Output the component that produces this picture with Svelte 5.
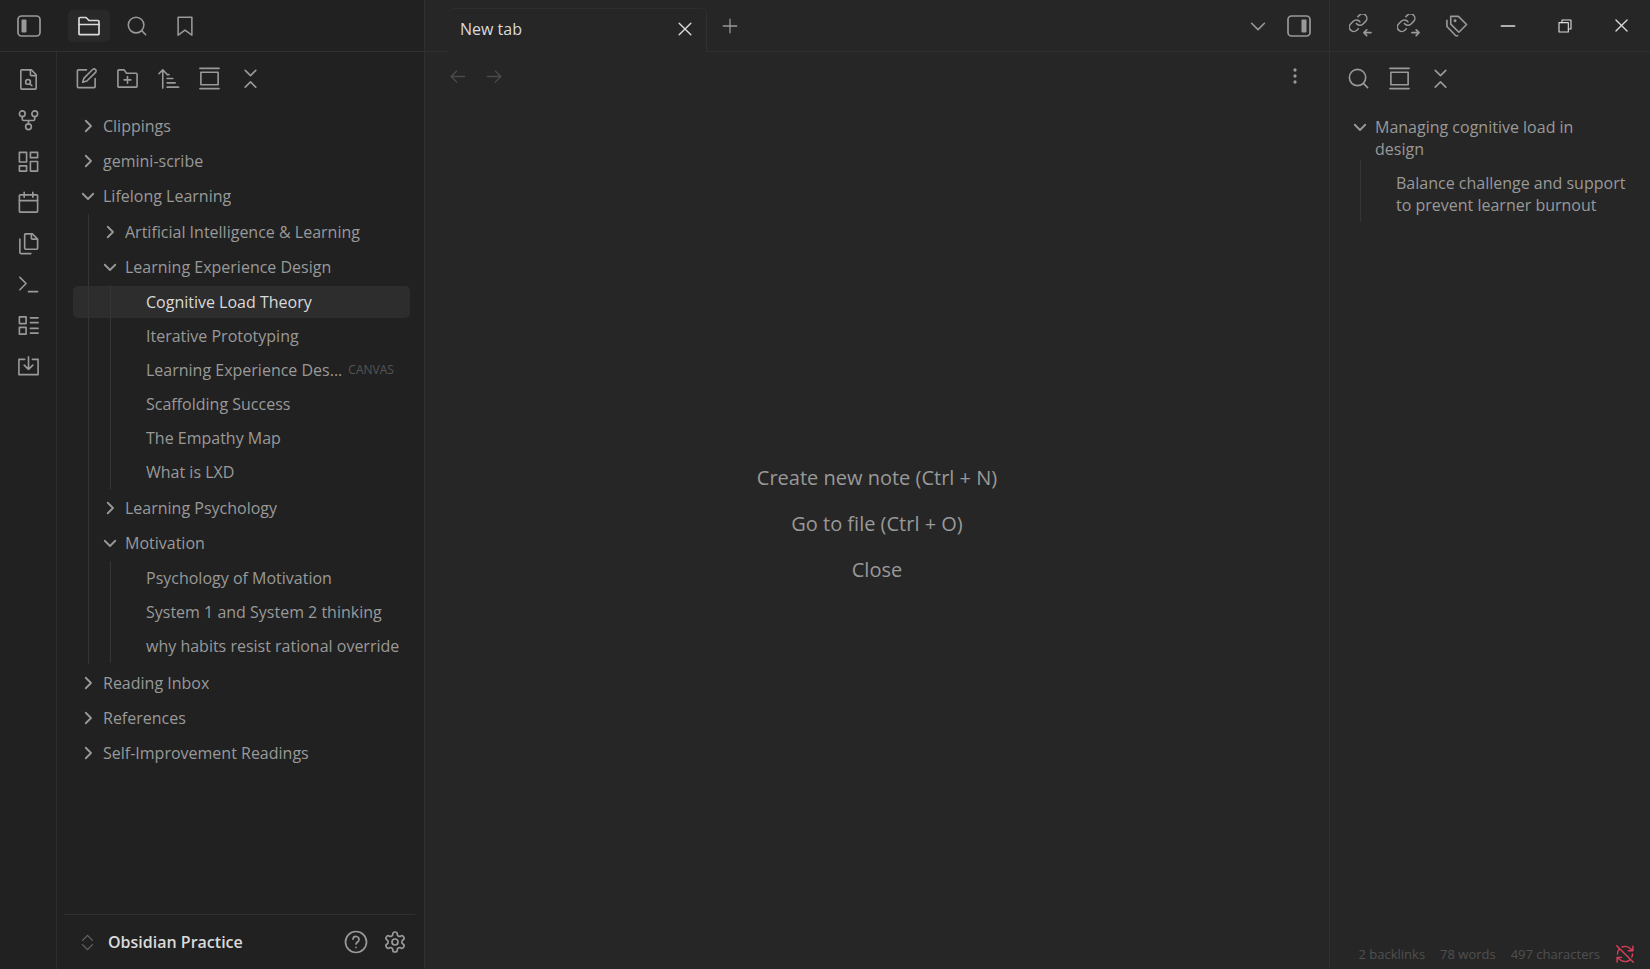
<script lang="ts">
  interface Item {
    name: string;
    tag?: string;
    active?: boolean;
    open?: boolean;
    children?: Item[];
  }

  const link =
    '<g transform="translate(-1.5 -2) scale(.92)"><path d="M10 13a5 5 0 0 0 7.54.54l3-3a5 5 0 0 0-7.07-7.07l-1.72 1.71"/><path d="M14 11a5 5 0 0 0-7.54-.54l-3 3a5 5 0 0 0 7.07 7.07l1.71-1.71"/></g>';

  const icons: Record<string, string> = {
    sidebarLeft: '<rect x="1" y="2" width="22" height="20" rx="3.5"/><rect x="4.5" y="5.5" width="5" height="13" rx="1" fill="currentColor" stroke="none"/>',
    sidebarRight: '<rect x="1" y="2" width="22" height="20" rx="3.5"/><rect x="14.5" y="5.5" width="5" height="13" rx="1" fill="currentColor" stroke="none"/>',
    folder: '<path d="M2 20V4.5a1 1 0 0 1 1-1h6l3 3h9a1 1 0 0 1 1 1V20a.6.6 0 0 1-.6.6H2.6A.6.6 0 0 1 2 20Z"/><path d="M2 10.5h20"/>',
    search: '<circle cx="11" cy="11" r="8.5"/><path d="m21.5 21.5-4.4-4.4"/>',
    bookmark: '<path d="M4.5 2.5h15V22L12 16.5 4.5 22Z"/>',
    fileSearch: '<path d="M14 2v5a1 1 0 0 0 1 1h5"/><path d="M15 2H5a1 1 0 0 0-1 1v18a1 1 0 0 0 1 1h14a1 1 0 0 0 1-1V7Z"/><circle cx="11.5" cy="14.5" r="2.5"/><path d="m13.3 16.3 2.2 2.2"/>',
    graph: '<circle cx="12" cy="18.5" r="3"/><circle cx="5.5" cy="5" r="3"/><circle cx="18.5" cy="5" r="3"/><path d="M18.5 8v2.5A1.5 1.5 0 0 1 17 12H7a1.5 1.5 0 0 1-1.5-1.5V8M12 12v3.5"/>',
    dashboard: '<rect x="2.5" y="2.5" width="7.5" height="10"/><rect x="14" y="2.5" width="7.5" height="5.5"/><rect x="14" y="12" width="7.5" height="10"/><rect x="2.5" y="16.5" width="7.5" height="5.5"/>',
    calendar: '<rect x="2.5" y="4" width="19" height="18" rx="1"/><path d="M7.5 1.5v5M16.5 1.5v5M2.5 10h19"/>',
    files: '<path d="M20.5 7.5H16a1 1 0 0 1-1-1V2"/><path d="M9 18a1 1 0 0 1-1-1V3a1 1 0 0 1 1-1h7l5.5 5.5V17a1 1 0 0 1-1 1Z"/><path d="M3 7.5v14a1 1 0 0 0 1 1h10.5"/>',
    terminal: '<path d="m3 17.5 6.5-6.5L3 4.5M12 19.5h9.5"/>',
    list: '<rect x="2.5" y="3" width="7" height="7"/><rect x="2.5" y="14" width="7" height="7"/><path d="M14 4h8M14 9h8M14 15h8M14 20h8"/>',
    importBox: '<path d="M8 4.5H2v16h20v-16h-6M12 2v13M7.5 10.5 12 15l4.5-4.5"/>',
    edit: '<path d="M12 3H3.5a1 1 0 0 0-1 1v16.500a1 1 0 0 0 1 1H20a1 1 0 0 0 1-1V12"/><path d="M18.4 2.600a2.1 2.1 0 0 1 3 3l-9 9L8 16l1.400-4.400Z"/>',
    folderPlus: '<path d="M2 20V4a1 1 0 0 1 1-1h5.500L11 6.500h10a1 1 0 0 1 1 1V20a1 1 0 0 1-1 1H3a1 1 0 0 1-1-1Z"/><path d="M12 10v7M8.500 13.500h7"/>',
    sort: '<path d="m2 7 4-4 4 4M6 3v19M10.500 8h2M10.500 12h6M10.500 16.500h8.500M10.500 21h12"/>',
    gallery: '<path d="M2 1.500h20M2 22.500h20"/><rect x="3" y="5.500" width="18" height="13"/>',
    collapse: '<path d="m6.500 21 5.500-5.500 5.500 5.500M6.500 3.500 12 9l5.500-5.500"/>',
    close: '<path d="m5 5 14 14M19 5 5 19"/>',
    plus: '<path d="M12 3v18M3 12h18"/>',
    down: '<path d="m5 9 7 7 7-7"/>',
    right: '<path d="m9 5 7 7-7 7"/>',
    back: '<path d="M21 12H4M11 5l-7 7 7 7"/>',
    forward: '<path d="M3 12h17M13 5l7 7-7 7"/>',
    more: '<g fill="currentColor" stroke="none"><circle cx="12" cy="4" r="2.2"/><circle cx="12" cy="12" r="2.2"/><circle cx="12" cy="20" r="2.2"/></g>',
    linkIn: link + '<path d="M23 19.5h-7M18.500 16.500l-3 3 3 3"/>',
    linkOut: link + '<path d="M15.500 19.500h7M20 16.500l3 3-3 3"/>',
    tags: '<path d="M6 2.500v8l8.500 8.500 8-8L14 2.500Z"/><path d="M2 6.500V13l9 9.500a1.500 1.500 0 0 0 2.200 0"/><circle cx="10.500" cy="7" r=".7" fill="currentColor"/>',
    minimize: '<path d="M3 12h18"/>',
    restore: '<rect x="3" y="7" width="14" height="14"/><path d="M7.500 7V3H21v13.500h-4"/>',
    updown: '<path d="m5 15 7 7 7-7M5 9l7-7 7 7"/>',
    help: '<circle cx="12" cy="12" r="10.500"/><path d="M9 9.200a3 3 0 0 1 6 .6c0 2-3 2.700-3 4.200M12 17.300v.2"/>',
    gear: '<path d="M12.22 2h-.44a2 2 0 0 0-2 2v.18a2 2 0 0 1-1 1.73l-.43.25a2 2 0 0 1-2 0l-.15-.08a2 2 0 0 0-2.73.73l-.22.38a2 2 0 0 0 .73 2.73l.15.1a2 2 0 0 1 1 1.72v.51a2 2 0 0 1-1 1.74l-.15.09a2 2 0 0 0-.73 2.73l.22.38a2 2 0 0 0 2.73.73l.15-.08a2 2 0 0 1 2 0l.43.25a2 2 0 0 1 1 1.73V20a2 2 0 0 0 2 2h.44a2 2 0 0 0 2-2v-.18a2 2 0 0 1 1-1.73l.43-.25a2 2 0 0 1 2 0l.15.08a2 2 0 0 0 2.73-.73l.22-.39a2 2 0 0 0-.73-2.73l-.15-.08a2 2 0 0 1-1-1.74v-.5a2 2 0 0 1 1-1.74l.15-.09a2 2 0 0 0 .73-2.73l-.22-.38a2 2 0 0 0-2.73-.73l-.15.08a2 2 0 0 1-2 0l-.43-.25a2 2 0 0 1-1-1.73V4a2 2 0 0 0-2-2z"/><circle cx="12" cy="12" r="3"/>',
    syncOff: '<path d="M21 8l-2.300-2.300A9.500 9.500 0 0 0 8.500 3.600M21.500 2.500V8H16M3 12a9 9 0 0 1 2.200-6M21 12c0 1.300-.3 2.500-.8 3.600M3 16l2.300 2.300A9.500 9.500 0 0 0 18 19M8 16H2.500v5.500M2 2l20 20"/>',
  };

  const ribbon = [
    ['fileSearch', 'Open quick switcher'],
    ['graph', 'Open graph view'],
    ['dashboard', 'Create new canvas'],
    ['calendar', "Open today's daily note"],
    ['files', 'Insert template'],
    ['terminal', 'Open command palette'],
    ['list', 'Create new base'],
    ['importBox', 'Import'],
  ];

  const tools = [
    ['edit', 'New note'],
    ['folderPlus', 'New folder'],
    ['sort', 'Change sort order'],
    ['gallery', 'Auto-reveal current file'],
    ['collapse', 'Collapse all'],
  ];

  const outlineTools = [
    ['search', 'Search'],
    ['gallery', 'Auto-scroll'],
    ['collapse', 'Collapse outline'],
  ];

  const files: Item[] = [
    { name: 'Clippings', children: [] },
    { name: 'gemini-scribe', children: [] },
    {
      name: 'Lifelong Learning',
      open: true,
      children: [
        { name: 'Artificial Intelligence & Learning', children: [] },
        {
          name: 'Learning Experience Design',
          open: true,
          children: [
            { name: 'Cognitive Load Theory', active: true },
            { name: 'Iterative Prototyping' },
            { name: 'Learning Experience Des...', tag: 'CANVAS' },
            { name: 'Scaffolding Success' },
            { name: 'The Empathy Map' },
            { name: 'What is LXD' },
          ],
        },
        { name: 'Learning Psychology', children: [] },
        {
          name: 'Motivation',
          open: true,
          children: [
            { name: 'Psychology of Motivation' },
            { name: 'System 1 and System 2 thinking' },
            { name: 'why habits resist rational override' },
          ],
        },
      ],
    },
    { name: 'Reading Inbox', children: [] },
    { name: 'References', children: [] },
    { name: 'Self-Improvement Readings', children: [] },
  ];
</script>

{#snippet icon(name: string, size = 24)}
  <svg class="icon" width={size} height={size} viewBox="0 0 24 24" aria-hidden="true">{@html icons[name]}</svg>
{/snippet}

{#snippet tree(items: Item[], depth: number)}
  <ul class="tree" class:nested={depth > 0}>
    {#each items as item}
      <li>
        <button class="row" class:file={!item.children} class:active={item.active} style="--depth: {depth}">
          {#if item.children}
            <span class="twist">{@render icon(item.open ? 'down' : 'right', 18)}</span>
          {/if}
          <span class="name">{item.name}</span>
          {#if item.tag}<span class="tag">{item.tag}</span>{/if}
        </button>
        {#if item.open && item.children}
          <div class="kids" style="--depth: {depth}">{@render tree(item.children, depth + 1)}</div>
        {/if}
      </li>
    {/each}
  </ul>
{/snippet}

<div class="app">
  <aside class="left">
    <header class="bar">
      <button class="toggle" aria-label="Toggle left sidebar">{@render icon('sidebarLeft')}</button>
      <button class="panel-tab on" aria-label="Files">{@render icon('folder')}</button>
      <button class="panel-tab" aria-label="Search">{@render icon('search', 22)}</button>
      <button class="panel-tab" aria-label="Bookmarks">{@render icon('bookmark', 22)}</button>
    </header>
    <div class="left-body">
      <nav class="ribbon">
        {#each ribbon as [name, label]}
          <button aria-label={label}>{@render icon(name, 23)}</button>
        {/each}
      </nav>
      <div class="explorer">
        <div class="tools">
          {#each tools as [name, label]}
            <button aria-label={label}>{@render icon(name, 23)}</button>
          {/each}
        </div>
        {@render tree(files, 0)}
        <footer class="vault">
          <button class="vault-name"><span class="dim">{@render icon('updown', 17)}</span>Obsidian Practice</button>
          <button aria-label="Help">{@render icon('help')}</button>
          <button aria-label="Settings">{@render icon('gear')}</button>
        </footer>
      </div>
    </div>
  </aside>

  <main>
    <header class="bar tabs">
      <div class="tab">
        <span>New tab</span>
        <button aria-label="Close tab">{@render icon('close', 20)}</button>
      </div>
      <button class="new" aria-label="New tab">{@render icon('plus', 18)}</button>
      <div class="tabs-end">
        <button aria-label="Tab list">{@render icon('down', 22)}</button>
        <button aria-label="Toggle right sidebar">{@render icon('sidebarRight')}</button>
      </div>
    </header>
    <div class="view-bar">
      <button class="faint" aria-label="Back" disabled>{@render icon('back', 19)}</button>
      <button class="faint" aria-label="Forward" disabled>{@render icon('forward', 19)}</button>
      <button class="more" aria-label="More options">{@render icon('more', 18)}</button>
    </div>
    <div class="empty">
      <button>Create new note (Ctrl + N)</button>
      <button>Go to file (Ctrl + O)</button>
      <button>Close</button>
    </div>
  </main>

  <aside class="right">
    <header class="bar">
      <button class="side-tab" aria-label="Backlinks">{@render icon('linkIn', 23)}</button>
      <button class="side-tab" aria-label="Outgoing links">{@render icon('linkOut', 23)}</button>
      <button class="side-tab" aria-label="Tags">{@render icon('tags', 23)}</button>
      <div class="window">
        <button aria-label="Minimize">{@render icon('minimize', 18)}</button>
        <button aria-label="Restore">{@render icon('restore', 16)}</button>
        <button aria-label="Close">{@render icon('close', 19)}</button>
      </div>
    </header>
    <div class="tools">
      {#each outlineTools as [name, label]}
        <button aria-label={label}>{@render icon(name, 23)}</button>
      {/each}
    </div>
    <div class="outline">
      <button class="heading"><span class="twist">{@render icon('down', 18)}</span>Managing cognitive load in design</button>
      <div class="sub">
        <button class="heading">Balance challenge and support to prevent learner burnout</button>
      </div>
    </div>
    <footer class="status">
      <span>2 backlinks</span>
      <span>78 words</span>
      <span>497 characters</span>
      <button aria-label="Sync is off">{@render icon('syncOff', 20)}</button>
    </footer>
  </aside>
</div>

<style>
  :global(body) {
    background: #262626;
  }
  .app {
    --line: #303030;
    --muted: #999;
    display: grid;
    grid-template-columns: 425px 1fr 321px;
    min-height: 100vh;
    color: var(--muted);
    font: 16px/22px "Segoe UI", "Open Sans", "Noto Sans", sans-serif;
  }
  button {
    display: flex;
    align-items: center;
    justify-content: center;
    padding: 0;
    border: 0;
    background: none;
    color: inherit;
    font: inherit;
    text-align: left;
  }
  .icon {
    display: block;
    flex: none;
    fill: none;
    stroke: currentColor;
    stroke-width: 1.7;
    stroke-linecap: round;
    stroke-linejoin: round;
  }
  .bar {
    display: flex;
    align-items: center;
    box-sizing: border-box;
    height: 52px;
    border-bottom: 1px solid var(--line);
  }

  .left {
    display: flex;
    flex-direction: column;
    border-right: 1px solid #303030;
    background: #212121;
  }
  .left .bar {
    gap: 6px;
  }
  .toggle {
    width: 57px;
  }
  .panel-tab {
    width: 42px;
    height: 32px;
    border-radius: 5px;
  }
  .toggle + .panel-tab {
    margin-left: 5px;
  }
  .panel-tab.on {
    background: #292929;
    color: #dadada;
  }
  .left-body {
    display: flex;
    flex: 1;
  }
  .ribbon {
    display: flex;
    flex-direction: column;
    gap: 18px;
    box-sizing: border-box;
    width: 57px;
    padding-top: 16px;
    border-right: 1px solid #2e2e2e;
  }
  .explorer {
    display: flex;
    flex: 1;
    flex-direction: column;
    min-width: 0;
  }
  .tools {
    display: flex;
    gap: 18px;
    padding: 15px 18px 0;
  }

  .tree {
    margin: 0;
    padding: 19px 14px 0 16px;
    list-style: none;
  }
  .tree.nested {
    padding: 1px 0;
  }
  .row {
    justify-content: flex-start;
    box-sizing: border-box;
    width: 100%;
    height: 33px;
    margin-bottom: 2px;
    padding: 0 10px 0 calc(6px + var(--depth) * 22px);
    border-radius: 5px;
    white-space: nowrap;
  }
  .row.file {
    height: 32px;
    padding-left: calc(29px + var(--depth) * 22px);
  }
  .row.active {
    background: #2d2d2e;
    color: #dadada;
  }
  .twist {
    display: flex;
    flex: none;
    width: 24px;
  }
  .twist .icon {
    stroke-width: 2.4;
  }
  .name {
    overflow: hidden;
    text-overflow: ellipsis;
  }
  .tag {
    margin-left: 6px;
    color: #555;
    font-size: 12px;
  }
  .kids {
    position: relative;
  }
  .kids::before {
    position: absolute;
    z-index: 1;
    top: 0;
    bottom: 2px;
    left: calc(15px + var(--depth) * 22px);
    width: 1px;
    background: #353535;
    content: "";
  }

  .vault {
    display: flex;
    align-items: center;
    gap: 15px;
    height: 54px;
    margin: auto 9px 0 7px;
    padding: 0 8px 0 15px;
    border-top: 1px solid var(--line);
  }
  .vault-name {
    flex: 1;
    justify-content: flex-start;
    gap: 12px;
    color: #dadada;
    font-weight: 600;
  }
  .dim {
    color: #666;
  }

  main {
    display: flex;
    flex-direction: column;
    min-width: 0;
  }
  .tabs {
    padding-left: 23px;
    background: linear-gradient(var(--line), var(--line)) left bottom / 23px 1px no-repeat;
    border-bottom: 0;
  }
  .tab {
    display: flex;
    align-items: center;
    align-self: flex-end;
    justify-content: space-between;
    box-sizing: border-box;
    width: 259px;
    height: 44px;
    padding: 0 11px 4px 12px;
    border-top: 1px solid #2d2d2d;
    border-right: 1px solid var(--line);
    border-radius: 6px 6px 0 0;
    color: #dadada;
  }
  .new {
    align-self: stretch;
    width: 46px;
    border-bottom: 1px solid var(--line);
  }
  .tabs-end {
    display: flex;
    flex: 1;
    align-items: center;
    align-self: stretch;
    justify-content: flex-end;
    gap: 18px;
    padding-right: 18px;
    border-bottom: 1px solid var(--line);
  }
  .view-bar {
    display: flex;
    align-items: center;
    gap: 18px;
    height: 48px;
    padding: 0 25px 0 23px;
  }
  .faint {
    color: #4a4a4a;
  }
  .more {
    margin-left: auto;
  }
  .empty {
    display: flex;
    flex: 1;
    flex-direction: column;
    align-items: center;
    justify-content: center;
    gap: 20px;
    padding-bottom: 22px;
    font-size: 20px;
    line-height: 26px;
  }

  .right {
    display: flex;
    flex-direction: column;
    border-left: 1px solid #303030;
  }
  .right .bar {
    padding-left: 6px;
  }
  .right .tools {
    padding-left: 17px;
  }
  .side-tab {
    width: 48px;
  }
  .window {
    display: flex;
    flex: 1;
    color: #dadada;
  }
  .window button {
    flex: 1;
  }
  .outline {
    padding: 26px 20px 0 21px;
  }
  .heading {
    align-items: flex-start;
    padding-right: 16px;
  }
  .heading .twist {
    padding: 2px 0;
  }
  .sub {
    margin-left: 9px;
    padding: 12px 0 6px 35px;
    border-left: 1px solid #353535;
  }
  .sub .heading {
    padding-right: 0;
  }
  .status {
    display: flex;
    align-items: center;
    justify-content: flex-end;
    gap: 15px;
    margin-top: auto;
    padding: 0 15px 4px 0;
    color: #505050;
    font-size: 13px;
  }
  .status button {
    color: #d8405a;
  }
</style>
